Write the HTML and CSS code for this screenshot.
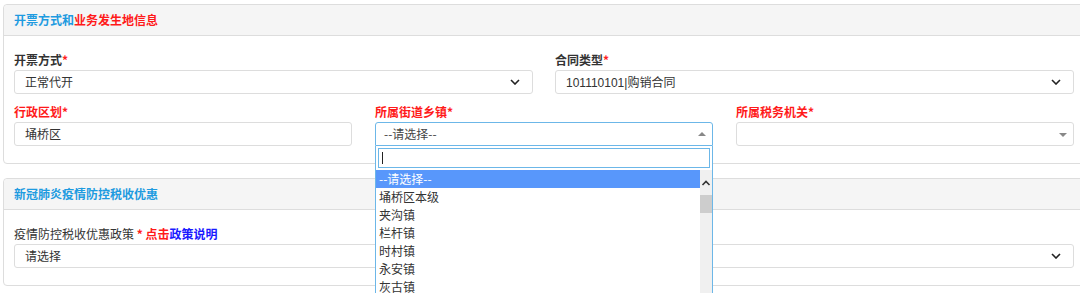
FILE: index.html
```html
<!DOCTYPE html>
<html lang="zh-CN">
<head>
  <meta charset="UTF-8">
  <title>开票方式和业务发生地信息</title>
  <link rel="stylesheet" href="styles.css">
</head>
<body>

  <div class="page">

    <!-- 开票方式和业务发生地信息 -->
    <div class="panel">
      <div class="panel-head">
        <span class="t-blue">开票方式和</span><span class="t-red">业务发生地信息</span>
      </div>
      <div class="panel-body">
        <div class="row two">
          <div class="field">
            <label>开票方式<i>*</i></label>
            <div class="select">正常代开
              <svg class="chev" width="10" height="6" viewBox="0 0 10 6"><path d="M1 1l4 4 4-4" fill="none" stroke="#222" stroke-width="1.6"/></svg>
            </div>
          </div>
          <div class="field">
            <label>合同类型<i>*</i></label>
            <div class="select"><span class="num">101110101|</span>购销合同
              <svg class="chev" width="10" height="6" viewBox="0 0 10 6"><path d="M1 1l4 4 4-4" fill="none" stroke="#222" stroke-width="1.6"/></svg>
            </div>
          </div>
        </div>

        <div class="row three">
          <div class="field">
            <label class="red">行政区划<i>*</i></label>
            <div class="select">埇桥区</div>
          </div>
          <div class="field drop-host">
            <label class="red">所属街道乡镇<i>*</i></label>
            <div class="s2 open">--请选择--<b class="tri up"></b></div>
            <div class="s2-drop">
              <div class="s2-search"><span class="caret"></span></div>
              <div class="s2-results">
                <ul>
                  <li class="hl">--请选择--</li>
                  <li>埇桥区本级</li>
                  <li>夹沟镇</li>
                  <li>栏杆镇</li>
                  <li>时村镇</li>
                  <li>永安镇</li>
                  <li>灰古镇</li>
                </ul>
                <div class="sbar">
                  <svg width="12" height="10" viewBox="0 0 12 10"><path d="M2.5 7l3.5-3.5 3.5 3.5" fill="none" stroke="#333" stroke-width="1.6"/></svg>
                  <div class="thumb"></div>
                </div>
              </div>
            </div>
          </div>
          <div class="field">
            <label class="red">所属税务机关<i>*</i></label>
            <div class="s2"><b class="tri"></b></div>
          </div>
        </div>
      </div>
    </div>

    <!-- 新冠肺炎疫情防控税收优惠 -->
    <div class="panel">
      <div class="panel-head">
        <span class="t-blue">新冠肺炎疫情防控税收优惠</span>
      </div>
      <div class="panel-body">
        <div class="field">
          <label class="plain">疫情防控税收优惠政策 <i>*</i> <span class="t-red">点击</span><span class="t-link">政策说明</span></label>
          <div class="select">请选择
            <svg class="chev" width="10" height="6" viewBox="0 0 10 6"><path d="M1 1l4 4 4-4" fill="none" stroke="#222" stroke-width="1.6"/></svg>
          </div>
        </div>
      </div>
    </div>

  </div>

</body>
</html>
```

FILE: styles.css
```css
html, body {
  margin: 0;
  height: 293px;
  overflow: hidden;
}

body {
  font-family: "Noto Sans CJK SC", "Liberation Sans", sans-serif;
  font-size: 12px;
  color: #333;
  background-color: #fff;
}

.num {
  font-family: "Liberation Sans", sans-serif;
}

/* the panels run a little past the right edge of the window */
.page {
  width: 1082px;
  padding: 4px 0 0 3px;
}

.panel {
  border: 1px solid #ddd;
  border-radius: 4px;
  margin-bottom: 14px;
}

.panel-head {
  height: 30px;
  line-height: 30px;
  padding-left: 10px;
  background-color: #f5f5f5;
  border-bottom: 1px solid #ddd;
  border-radius: 4px 4px 0 0;
  font-weight: bold;
}

.t-blue { color: #1e9be0; }
.t-red { color: #ff1a1a; }
.t-link { color: #1a1aff; }

.panel-body {
  padding: 15px 10px 17px 10px;
}

.row {
  display: grid;
  margin-bottom: 9px;
}

.row:last-child {
  margin-bottom: 0;
}

.row.two {
  grid-template-columns: 1fr 1fr;
  column-gap: 22px;
}

.row.three {
  grid-template-columns: 1fr 1fr 1fr;
  column-gap: 23px;
}

.field label {
  display: block;
  height: 18px;
  line-height: 18px;
  margin-bottom: 1px;
  font-weight: bold;
  color: #333;
}

.field label i {
  font-style: normal;
  color: #ff2020;
}

.field label.red {
  color: #ff1a1a;
}

.field label.plain {
  font-weight: normal;
}

.field label.plain i,
.field label.plain span {
  font-weight: bold;
}

.select {
  position: relative;
  height: 22px;
  line-height: 22px;
  padding-left: 10px;
  border: 1px solid #ddd;
  border-radius: 3px;
  color: #333;
}

.chev {
  position: absolute;
  right: 12px;
  top: 8px;
}

/* select2 style box */
.s2 {
  position: relative;
  height: 22px;
  line-height: 22px;
  padding-left: 8px;
  border: 1px solid #ddd;
  border-radius: 3px;
  color: #444;
}

.s2.open {
  border-color: #6cb7e8;
  border-radius: 3px 3px 0 0;
}

.tri {
  position: absolute;
  right: 6px;
  top: 10px;
  width: 0;
  height: 0;
  border-left: 4px solid transparent;
  border-right: 4px solid transparent;
  border-top: 4px solid #888;
}

.tri.up {
  top: 9px;
  border-top: none;
  border-bottom: 4px solid #888;
}

.drop-host {
  position: relative;
}

.s2-drop {
  position: absolute;
  left: 0;
  right: 0;
  top: 43px;
  height: 160px;
  background-color: #fff;
  border: 1px solid #6cb7e8;
  border-top: none;
  z-index: 5;
}

.s2-search {
  margin: 2px;
  height: 18px;
  border: 1px solid #6cb7e8;
  position: relative;
}

.caret {
  position: absolute;
  left: 3px;
  top: 3px;
  width: 1px;
  height: 12px;
  background-color: #222;
}

.s2-results {
  display: flex;
}

.s2-results ul {
  flex: 1;
  list-style: none;
  margin: 0;
  padding: 0;
}

.s2-results li {
  height: 18px;
  line-height: 18px;
  padding-left: 3px;
  color: #333;
}

.s2-results li.hl {
  background-color: #5897fb;
  color: #fff;
}

.sbar {
  width: 12px;
  background-color: #f0f0f0;
  padding-top: 8px;
}

.sbar svg {
  display: block;
}

.thumb {
  margin-top: 7px;
  height: 18px;
  background-color: #cdcdcd;
}
```
